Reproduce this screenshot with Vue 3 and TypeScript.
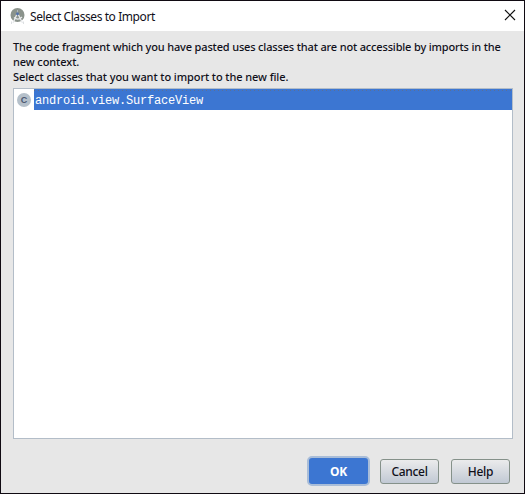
<script setup lang="ts">
import { ref } from 'vue'

const classes: string[] = ['android.view.SurfaceView']
const selected = ref<string>(classes[0])
</script>

<template>
  <div class="dialog">
    <header class="titlebar">
      <svg class="logo" width="16" height="17" viewBox="0 0 16 17">
        <circle cx="7.5" cy="7" r="7" fill="#8b938c" />
        <path d="M7 6L3 15M8 6L12.5 15M4 9.5Q8 13 12 9" fill="none" stroke="#e9ebed" stroke-width="1.3" />
        <path d="M1.5 13.5v2.5M13.5 13.5v2.5" stroke="#dcdfe2" />
        <path d="M7.5 2v3" stroke="#b0b8bc" />
        <circle cx="7.5" cy="5.8" r="1.5" fill="#5371a8" />
      </svg>
      <h1 class="title">Select Classes to Import</h1>
      <svg class="close" width="12" height="12" viewBox="0 0 12 12">
        <path d="M1 1L11 11M11 1L1 11" stroke="#111" stroke-width="1.15" />
      </svg>
    </header>
    <main class="body">
      <div class="message">
        <p class="first">The code fragment which you have pasted uses classes that are not accessible by imports in the</p>
        <p>new context.</p>
        <p>Select classes that you want to import to the new file.</p>
      </div>
      <ul class="list">
        <li v-for="name in classes" :key="name" class="row" :class="{ selected: name === selected }" @click="selected = name">
          <span class="badge">C</span>
          <span class="name">{{ name }}</span>
        </li>
      </ul>
    </main>
    <footer class="actions">
      <button class="button primary">OK</button>
      <button class="button cancel">Cancel</button>
      <button class="button help">Help</button>
    </footer>
  </div>
</template>

<style>
body {
  margin: 0;
}
</style>

<style scoped>
.dialog {
  box-sizing: border-box;
  width: 525px;
  height: 494px;
  border: 1px solid #100a12;
  background: #e7e7e7;
  color: #10101a;
  font-family: "Noto Sans", "Open Sans", sans-serif;
  display: flex;
  flex-direction: column;
}
.titlebar {
  height: 30px;
  flex: none;
  background: #fff;
  display: flex;
  align-items: center;
  padding: 0 8px 0 9px;
}
.logo {
  margin-right: 4px;
}
.title {
  flex: 1;
  margin: 0;
  padding-top: 1px;
  font-size: 12px;
  font-weight: 400;
  line-height: 16px;
  letter-spacing: -0.42px;
  white-space: nowrap;
}
.close {
  margin-top: -2px;
}
.body {
  padding: 8px 11px 0 12px;
}
.message {
  height: 49px;
  font-size: 11px;
  font-weight: 500;
  line-height: 15px;
  letter-spacing: -0.09px;
}
.message p {
  margin: 0;
  white-space: nowrap;
}
.message .first {
  letter-spacing: -0.16px;
}
.list {
  box-sizing: border-box;
  height: 351px;
  margin: 0;
  padding: 0;
  list-style: none;
  border: 1px solid #b3bdc8;
  background: #fff;
}
.row {
  height: 21px;
  display: flex;
  align-items: center;
}
.badge {
  width: 14px;
  height: 14px;
  margin: 0 3px;
  border-radius: 50%;
  background: #b5c0ca;
  color: #4b5870;
  font: 700 9px/14px "Liberation Sans", sans-serif;
  text-align: center;
}
.name {
  box-sizing: border-box;
  flex: 1;
  height: 21px;
  padding-left: 1px;
  font: 12px/21px "Liberation Mono", monospace;
  letter-spacing: -0.2px;
}
.selected .name {
  background: repeating-linear-gradient(90deg, #5c6f94 0 1px, transparent 1px 4px) 0 1px / 100% 1px no-repeat #3c76d2;
  color: #fff;
  padding-top: 1px;
  line-height: 22px;
}
.actions {
  display: flex;
  align-items: center;
  justify-content: flex-end;
  padding: 17px 14px 0 0;
}
.button {
  box-sizing: border-box;
  width: 59px;
  height: 25px;
  padding: 1px 0 0;
  border: 1px solid #85918a;
  border-radius: 3px;
  background: linear-gradient(#ebebec, #c1c9d4);
  color: #10101a;
  font: 500 12px/22px "Noto Sans", "Open Sans", sans-serif;
  letter-spacing: -0.3px;
}
.primary {
  width: 63px;
  height: 30px;
  border: 2px solid #a9bdd8;
  border-radius: 5px;
  background: #3c76d2;
  color: #fff;
  font-weight: 700;
}
.cancel {
  margin: 0 12px 0 10px;
}
</style>
